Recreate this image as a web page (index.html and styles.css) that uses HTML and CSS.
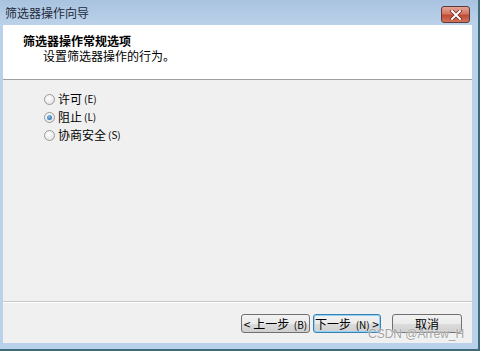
FILE: index.html
```html
<!DOCTYPE html>
<html lang="zh">
<head>
    <meta charset="UTF-8">
    <title>筛选器操作向导</title>
    <link rel="stylesheet" href="styles.css">
</head>
<body>
<div class="window">
    <div class="titlebar">
        <span class="title">筛选器操作向导</span>
        <button class="close" aria-label="关闭">
            <svg width="14" height="10" viewBox="0 0 14 10">
                <path d="M3 1 L11 9 M11 1 L3 9" stroke="#6b2a20" stroke-width="3.4" stroke-linecap="square"/>
                <path d="M3 1 L11 9 M11 1 L3 9" stroke="#ffffff" stroke-width="2" stroke-linecap="square"/>
            </svg>
        </button>
    </div>
    <div class="client">
        <div class="header">
            <h1>筛选器操作常规选项</h1>
            <p>设置筛选器操作的行为。</p>
        </div>
        <div class="body">
            <label class="option"><span class="radio"></span>许可 <span class="key">(E)</span></label>
            <label class="option"><span class="radio checked"></span>阻止 <span class="key">(L)</span></label>
            <label class="option"><span class="radio"></span>协商安全 <span class="key">(S)</span></label>
        </div>
        <div class="footer">
            <button class="btn btn-back">&lt; 上一步 <span class="key">(B)</span></button>
            <button class="btn btn-next">下一步 <span class="key">(N)</span> &gt;</button>
            <button class="btn btn-cancel">取消</button>
            <span class="watermark">CSDN @Arrew_H</span>
        </div>
    </div>
</div>
</body>
</html>
```

FILE: styles.css
```css
/* window frame */
body {
    margin: 0;
    padding: 0;
    background: #3f6a78;
    font-family: "Noto Sans CJK SC", "Liberation Sans", sans-serif;
    font-size: 12px;
    color: #000;
}

.window {
    width: 478px;
    height: 349px;
    background: #b9d1ea;
    display: flex;
    flex-direction: column;
    box-sizing: border-box;
    padding: 0 6px 6px 3px;
}

.titlebar {
    height: 25px;
    flex: 0 0 25px;
    display: flex;
    align-items: flex-start;
    justify-content: space-between;
    background: linear-gradient(#a8c2df, #bcd2ea);
    margin: 0 -6px 0 -3px;
    padding: 0 8px 0 5px;
}

.title {
    margin-top: 5px;
    line-height: 16px;
    color: #1e2a3a;
}

.close {
    margin-top: 6px;
    width: 29px;
    height: 17px;
    padding: 0;
    border: 1px solid #5b3a3a;
    border-radius: 3px;
    background: linear-gradient(#e4a496 0%, #d37662 45%, #c04a32 55%, #d4745c 100%);
    display: flex;
    align-items: center;
    justify-content: center;
}

.client {
    flex: 1;
    display: flex;
    flex-direction: column;
    background: #f0f0f0;
}

/* header */
.header {
    height: 55px;
    background: #ffffff;
    border-bottom: 1px solid #a0a0a0;
    padding: 8px 0 0 20px;
    box-sizing: border-box;
}

.header h1 {
    margin: 0;
    font-size: 12px;
    font-weight: bold;
    line-height: 15px;
}

.header p {
    margin: 0 0 0 20px;
    line-height: 15px;
}

/* options */
.body {
    flex: 1;
    display: flex;
    flex-direction: column;
    gap: 2px;
    padding: 11px 0 0 41px;
}

.option {
    display: flex;
    align-items: center;
    height: 16px;
    line-height: 16px;
}

.radio {
    width: 11px;
    height: 11px;
    border: 1px solid #9a9a9a;
    border-radius: 50%;
    background: radial-gradient(circle at 40% 35%, #ffffff, #dcdcdc);
    margin-right: 3px;
    box-sizing: border-box;
    position: relative;
}

.radio.checked::after {
    content: "";
    position: absolute;
    left: 2px;
    top: 2px;
    width: 5px;
    height: 5px;
    border-radius: 50%;
    background: radial-gradient(circle at 40% 35%, #7fc4f2, #1c5a97);
}

.key {
    font-size: 10px;
    margin-left: 2px;
}

/* footer */
.footer {
    height: 42px;
    border-top: 1px solid #c8c8c8;
    box-shadow: inset 0 1px 0 #ffffff;
    display: flex;
    align-items: flex-start;
    padding: 12px 0 0 238px;
    box-sizing: border-box;
    position: relative;
}

.btn {
    height: 19px;
    padding: 0;
    border: 1px solid #707070;
    border-radius: 3px;
    background: linear-gradient(#f2f2f2 0%, #ebebeb 50%, #dddddd 51%, #cfcfcf 100%);
    font-family: inherit;
    font-size: 12px;
    line-height: 15px;
    color: #000;
}

.btn-back {
    width: 69px;
}

.btn-next {
    width: 68px;
    margin-left: 3px;
    border-color: #3c7fb1;
    box-shadow: inset 0 0 0 1px #8ed2f7;
}

.btn-cancel {
    width: 70px;
    margin-left: 11px;
}

/* watermark over the buttons */
.watermark {
    position: absolute;
    left: 365px;
    top: 25px;
    font-family: "Liberation Sans", sans-serif;
    font-size: 12px;
    color: #a4a4a4;
    text-shadow: 0 0 2px #ffffff;
}
```
